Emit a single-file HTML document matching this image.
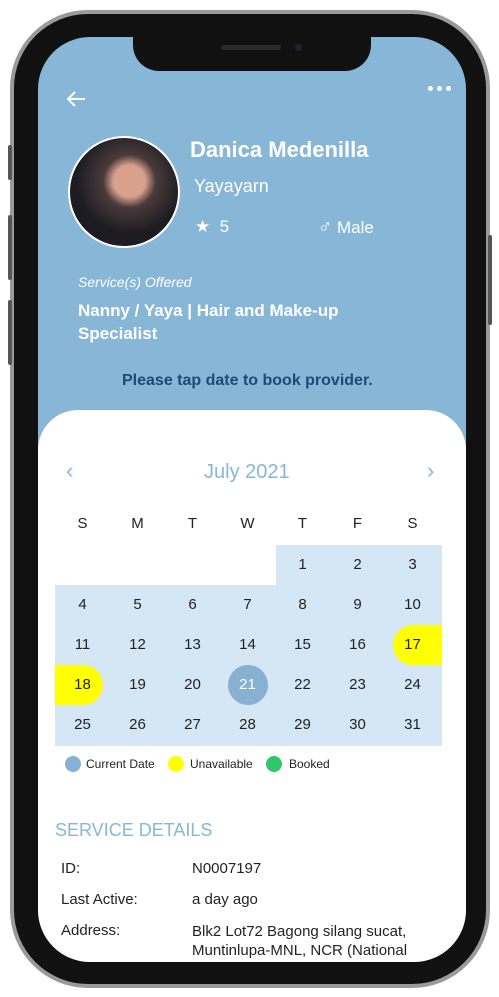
<!DOCTYPE html>
<html><head><style>
*{margin:0;padding:0;box-sizing:border-box}
body{width:499px;height:997px;background:#fff;position:relative;overflow:hidden;font-family:"Liberation Sans",sans-serif}
.frame{position:absolute;left:10px;top:10px;width:480px;height:978px;border-radius:78px;background:#9a9a9a;}
.body{position:absolute;left:14px;top:14px;width:472px;height:970px;border-radius:74px;background:#111;}
.btn{position:absolute;background:#555;width:4px;border-radius:2px}
.screen{position:absolute;left:38px;top:37px;width:428px;height:925px;border-radius:52px;overflow:hidden;background:#88b6d6}
.notch{position:absolute;left:95px;top:0;width:238px;height:34px;background:#111;border-radius:0 0 26px 26px}
.card{position:absolute;left:0;top:373px;width:428px;height:600px;background:#fff;border-radius:40px 40px 0 0}
.t{position:absolute;white-space:nowrap}
.w{color:#fff}
.grid{position:absolute}
.c{position:absolute;width:55px;height:40px;line-height:40px;text-align:center;font-size:15px;color:#222}
</style></head><body>
<div class="frame"></div>
<div class="btn" style="left:8px;top:145px;height:35px"></div>
<div class="btn" style="left:8px;top:215px;height:65px"></div>
<div class="btn" style="left:8px;top:300px;height:65px"></div>
<div class="btn" style="left:488px;top:235px;height:90px"></div>
<div class="body"></div>
<div class="screen">
<div class="notch"><div style="position:absolute;left:88px;top:8px;width:60px;height:5px;border-radius:3px;background:#2a2a2a"></div><div style="position:absolute;left:162px;top:7px;width:7px;height:7px;border-radius:50%;background:#223"></div></div>
<svg style="position:absolute;left:27px;top:52px" width="22" height="20" viewBox="0 0 22 20"><path d="M20 10H3M10 3L3 10l7 7" stroke="#fff" stroke-width="2" fill="none"/></svg>
<div style="position:absolute;left:390px;top:49px;width:24px;height:6px">
<span style="position:absolute;left:0;width:5px;height:5px;border-radius:50%;background:#fff"></span><span style="position:absolute;left:9px;width:5px;height:5px;border-radius:50%;background:#fff"></span><span style="position:absolute;left:18px;width:5px;height:5px;border-radius:50%;background:#fff"></span></div>
<div style="position:absolute;left:30px;top:99px;width:112px;height:112px;border-radius:50%;border:2px solid #fff;background:radial-gradient(circle at 55% 40%,#d9a08e 0 18%,#4a3a3a 30%,#1c1c22 60%)"></div>
<div class="t w" style="left:152px;top:100px;font-size:22px;font-weight:bold">Danica Medenilla</div>
<div class="t w" style="left:156px;top:139px;font-size:18px">Yayayarn</div>
<div class="t w" style="left:157px;top:180px;font-size:17px">★&nbsp; 5</div>
<div class="t w" style="left:280px;top:180px;font-size:17px"><span style="font-size:19px">♂</span> Male</div>
<div class="t w" style="left:40px;top:237px;font-size:14px;font-style:italic">Service(s) Offered</div>
<div class="t w" style="left:40px;top:262px;font-size:17px;font-weight:bold;line-height:23px">Nanny / Yaya | Hair and Make-up<br>Specialist</div>
<div class="t" style="left:84px;top:335px;font-size:16px;font-weight:bold;color:#1e4a78">Please tap date to book provider.</div>
<div class="card"></div>
<div class="t" style="left:28px;top:421px;font-size:22px;color:#88b6d6">‹</div>
<div class="t" style="left:389px;top:421px;font-size:22px;color:#88b6d6">›</div>
<div class="t" style="left:166px;top:424px;font-size:20px;color:#88b6d6">July 2021</div>
</div>
<div class="grid" style="left:0;top:0">
<div style="position:absolute;left:276px;top:545px;width:166px;height:40px;background:#d5e6f4"></div>
<div style="position:absolute;left:55px;top:585px;width:387px;height:161px;background:#d5e6f4"></div>
<div style="position:absolute;left:393px;top:625px;width:49px;height:40px;background:#ffff00;border-radius:20px 0 0 20px"></div>
<div style="position:absolute;left:55px;top:665px;width:48px;height:40px;background:#ffff00;border-radius:0 20px 20px 0"></div>
<div style="position:absolute;left:228px;top:665px;width:40px;height:40px;background:#88b0d0;border-radius:50%"></div>
<div class="c" style="left:55px;top:504px">S</div><div class="c" style="left:110px;top:504px">M</div><div class="c" style="left:165px;top:504px">T</div><div class="c" style="left:220px;top:504px">W</div><div class="c" style="left:275px;top:504px">T</div><div class="c" style="left:330px;top:504px">F</div><div class="c" style="left:385px;top:504px">S</div>
<div class="c" style="left:275px;top:545px">1</div><div class="c" style="left:330px;top:545px">2</div><div class="c" style="left:385px;top:545px">3</div>
<div class="c" style="left:55px;top:585px">4</div><div class="c" style="left:110px;top:585px">5</div><div class="c" style="left:165px;top:585px">6</div><div class="c" style="left:220px;top:585px">7</div><div class="c" style="left:275px;top:585px">8</div><div class="c" style="left:330px;top:585px">9</div><div class="c" style="left:385px;top:585px">10</div>
<div class="c" style="left:55px;top:625px">11</div><div class="c" style="left:110px;top:625px">12</div><div class="c" style="left:165px;top:625px">13</div><div class="c" style="left:220px;top:625px">14</div><div class="c" style="left:275px;top:625px">15</div><div class="c" style="left:330px;top:625px">16</div><div class="c" style="left:385px;top:625px">17</div>
<div class="c" style="left:55px;top:665px">18</div><div class="c" style="left:110px;top:665px">19</div><div class="c" style="left:165px;top:665px">20</div><div class="c" style="left:220px;top:665px;color:#fff">21</div><div class="c" style="left:275px;top:665px">22</div><div class="c" style="left:330px;top:665px">23</div><div class="c" style="left:385px;top:665px">24</div>
<div class="c" style="left:55px;top:705px">25</div><div class="c" style="left:110px;top:705px">26</div><div class="c" style="left:165px;top:705px">27</div><div class="c" style="left:220px;top:705px">28</div><div class="c" style="left:275px;top:705px">29</div><div class="c" style="left:330px;top:705px">30</div><div class="c" style="left:385px;top:705px">31</div>
<div style="position:absolute;left:65px;top:756px;width:16px;height:16px;border-radius:50%;background:#88b0d0"></div>
<div class="t" style="left:86px;top:757px;font-size:12px;color:#222">Current Date</div>
<div style="position:absolute;left:168px;top:756px;width:16px;height:16px;border-radius:50%;background:#ffff00"></div>
<div class="t" style="left:190px;top:757px;font-size:12px;color:#222">Unavailable</div>
<div style="position:absolute;left:266px;top:756px;width:16px;height:16px;border-radius:50%;background:#2ec76b"></div>
<div class="t" style="left:289px;top:757px;font-size:12px;color:#222">Booked</div>
<div class="t" style="left:55px;top:820px;font-size:18px;color:#88b6d6">SERVICE DETAILS</div>
<div class="t" style="left:61px;top:860px;font-size:15px;color:#222">ID:</div>
<div class="t" style="left:192px;top:860px;font-size:15px;color:#222">N0007197</div>
<div class="t" style="left:61px;top:891px;font-size:15px;color:#222">Last Active:</div>
<div class="t" style="left:192px;top:891px;font-size:15px;color:#222">a day ago</div>
<div class="t" style="left:61px;top:922px;font-size:15px;color:#222">Address:</div>
<div class="t" style="left:192px;top:922px;font-size:15px;color:#222;line-height:19px">Blk2 Lot72 Bagong silang sucat,<br>Muntinlupa-MNL, NCR (National</div>
</div>
</body></html>
